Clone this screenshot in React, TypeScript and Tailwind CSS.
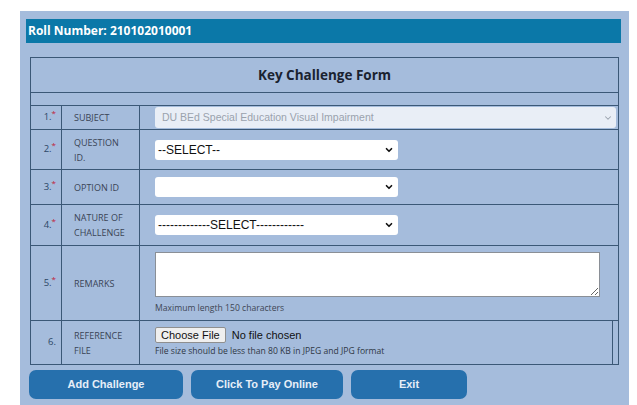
import { ChevronDown } from "lucide-react";

const cellLine = "border border-[#3b5877]";

function Num({ n, req = true }: { n: number; req?: boolean }) {
  return (
    <td className={`${cellLine} w-[31px] pr-[5px] text-right align-middle text-[9.5px] text-[#2c4766]`}>
      {n}.{req && <sup className="text-[8px] text-[#c0203a]">*</sup>}
    </td>
  );
}

function Label({ children }: { children: React.ReactNode }) {
  return (
    <td className={`${cellLine} w-[78px] pl-[12px] pr-1 align-middle text-[9px] leading-[15px] text-[#3a4456]`}>
      {children}
    </td>
  );
}

function Select({ value }: { value: string }) {
  return (
    <div className="relative flex h-[20px] w-[243px] items-center rounded-[3px] bg-white pl-[3px] font-['Liberation_Sans',Arial,sans-serif] text-[12px] text-[#111]">
      {value}
      <ChevronDown className="absolute right-[4px] top-[5px] h-[10px] w-[10px]" strokeWidth={4} />
    </div>
  );
}

export default function App() {
  return (
    <div className="min-h-[405px] bg-white pl-[20px] pt-[11px] font-['Open_Sans',sans-serif]">
      <div className="h-[394px] w-[609px] bg-[#a5bcdc] pt-[8px]">
        <div className="ml-[6px] mr-[8px] flex h-[24px] items-center bg-[#0b78a8] pl-[2px] text-[12px] font-bold text-white">
          Roll Number: 210102010001
        </div>

        <table className="mx-[10px] mt-[14px] w-[589px] border-collapse">
          <tbody>
            <tr className="h-[35px]">
              <td colSpan={4} className={`${cellLine} text-center text-[13.5px] font-bold text-[#1a2230]`}>
                Key Challenge Form
              </td>
            </tr>
            <tr className="h-[13px]">
              <td colSpan={4} className={cellLine}></td>
            </tr>
            <tr className="h-[24px]">
              <Num n={1} />
              <Label>SUBJECT</Label>
              <td colSpan={2} className={`${cellLine} pl-[15px] pr-[2px]`}>
                <div className="relative flex h-[21px] items-center rounded-[3px] bg-[#e9eef6] pl-[7px] font-['Liberation_Sans',Arial,sans-serif] text-[10.5px] text-[#9aa2ad]">
                  DU BEd Special Education Visual Impairment
                  <ChevronDown className="absolute right-[3px] top-[6px] h-[10px] w-[10px] text-[#9aa2ad]" strokeWidth={2.5} />
                </div>
              </td>
            </tr>
            <tr className="h-[40px]">
              <Num n={2} />
              <Label>
                QUESTION
                <br />
                ID.
              </Label>
              <td colSpan={2} className={`${cellLine} pl-[15px]`}>
                <Select value="--SELECT--" />
              </td>
            </tr>
            <tr className="h-[35px]">
              <Num n={3} />
              <Label>OPTION ID</Label>
              <td colSpan={2} className={`${cellLine} pl-[15px]`}>
                <Select value="" />
              </td>
            </tr>
            <tr className="h-[41px]">
              <Num n={4} />
              <Label>
                NATURE OF
                <br />
                CHALLENGE
              </Label>
              <td colSpan={2} className={`${cellLine} pl-[15px]`}>
                <Select value="-------------SELECT------------" />
              </td>
            </tr>
            <tr className="h-[75px]">
              <Num n={5} />
              <Label>REMARKS</Label>
              <td colSpan={2} className={`${cellLine} pl-[15px] pt-[6px] align-top`}>
                <textarea className="block h-[45px] w-[445px] resize border border-[#8a8f96] bg-white" />
                <div className="mt-[5px] text-[8.6px] text-[#3e4654]">Maximum length 150 characters</div>
              </td>
            </tr>
            <tr className="h-[44px]">
              <Num n={6} req={false} />
              <Label>
                REFERENCE
                <br />
                FILE
              </Label>
              <td className={`${cellLine} border-r-0 pl-[15px] pt-[6px] align-top`}>
                <div className="flex items-center gap-[6px] font-['Liberation_Sans',Arial,sans-serif] text-[11px] text-[#111]">
                  <span className="flex h-[16px] items-center rounded-[2px] border border-[#8f8f8f] bg-[#efefef] px-[5px]">
                    Choose File
                  </span>
                  No file chosen
                </div>
                <div className="mt-[1px] text-[8.6px] leading-[12px] text-[#2f3744]">
                  File size should be less than 80 KB in JPEG and JPG format
                </div>
              </td>
              <td className={`${cellLine} w-[6px]`}></td>
            </tr>
          </tbody>
        </table>

        <div className="ml-[9px] mt-[5px] flex gap-[8px] font-['Liberation_Sans',Arial,sans-serif] text-[11px] font-bold text-[#e6eef8]">
          <button className="h-[29px] w-[154px] rounded-[7px] bg-[#2670ad]">Add Challenge</button>
          <button className="h-[29px] w-[152px] rounded-[7px] bg-[#2670ad]">Click To Pay Online</button>
          <button className="h-[29px] w-[116px] rounded-[7px] bg-[#2670ad]">Exit</button>
        </div>
      </div>
    </div>
  );
}
